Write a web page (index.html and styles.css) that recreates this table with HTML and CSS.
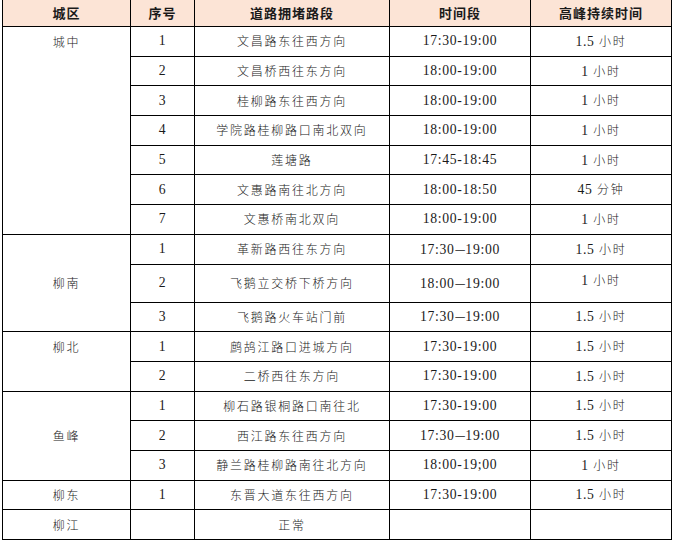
FILE: index.html
```html
<!DOCTYPE html>
<html lang="zh-CN">
<head>
<meta charset="utf-8">
<link rel="stylesheet" href="styles.css">
</head>
<body>
<table class="traffic">
  <colgroup>
    <col class="c-area"><col class="c-no"><col class="c-road"><col class="c-time"><col class="c-dur">
  </colgroup>
  <thead>
    <tr><th>城区</th><th>序号</th><th>道路拥堵路段</th><th>时间段</th><th>高峰持续时间</th></tr>
  </thead>
  <tbody>
    <tr><td class="area top" rowspan="7">城中</td><td class="num">1</td><td>文昌路东往西方向</td><td class="num">17:30-19:00</td><td><span class="num">1.5</span> 小时</td></tr>
    <tr><td class="num">2</td><td>文昌桥西往东方向</td><td class="num">18:00-19:00</td><td><span class="num">1</span> 小时</td></tr>
    <tr><td class="num">3</td><td>桂柳路东往西方向</td><td class="num">18:00-19:00</td><td><span class="num">1</span> 小时</td></tr>
    <tr><td class="num">4</td><td>学院路桂柳路口南北双向</td><td class="num">18:00-19:00</td><td><span class="num">1</span> 小时</td></tr>
    <tr><td class="num">5</td><td>莲塘路</td><td class="num">17:45-18:45</td><td><span class="num">1</span> 小时</td></tr>
    <tr><td class="num">6</td><td>文惠路南往北方向</td><td class="num">18:00-18:50</td><td><span class="num">45</span> 分钟</td></tr>
    <tr><td class="num">7</td><td>文惠桥南北双向</td><td class="num">18:00-19:00</td><td><span class="num">1</span> 小时</td></tr>

    <tr><td class="area" rowspan="3">柳南</td><td class="num">1</td><td>革新路西往东方向</td><td class="num">17:30<span class="dash">—</span>19:00</td><td><span class="num">1.5</span> 小时</td></tr>
    <tr class="tall"><td class="num">2</td><td>飞鹅立交桥下桥方向</td><td class="num">18:00<span class="dash">—</span>19:00</td><td class="raised"><span class="num">1</span> 小时</td></tr>
    <tr><td class="num">3</td><td>飞鹅路火车站门前</td><td class="num">17:30<span class="dash">—</span>19:00</td><td><span class="num">1.5</span> 小时</td></tr>

    <tr><td class="area top" rowspan="2">柳北</td><td class="num">1</td><td>鹧鸪江路口进城方向</td><td class="num">17:30-19:00</td><td><span class="num">1.5</span> 小时</td></tr>
    <tr><td class="num">2</td><td>二桥西往东方向</td><td class="num">17:30-19:00</td><td><span class="num">1.5</span> 小时</td></tr>

    <tr><td class="area" rowspan="3">鱼峰</td><td class="num">1</td><td>柳石路银桐路口南往北</td><td class="num">17:30-19:00</td><td><span class="num">1.5</span> 小时</td></tr>
    <tr><td class="num">2</td><td>西江路东往西方向</td><td class="num">17:30<span class="dash">—</span>19:00</td><td><span class="num">1.5</span> 小时</td></tr>
    <tr><td class="num">3</td><td>静兰路桂柳路南往北方向</td><td class="num">18:00-19;00</td><td><span class="num">1</span> 小时</td></tr>

    <tr><td class="area">柳东</td><td class="num">1</td><td>东晋大道东往西方向</td><td class="num">17:30-19:00</td><td><span class="num">1.5</span> 小时</td></tr>
    <tr><td class="area">柳江</td><td></td><td>正常</td><td></td><td></td></tr>
  </tbody>
</table>
</body>
</html>
```
FILE: styles.css
```css
html, body {
  margin: 0;
  padding: 0;
  background: #ffffff;
}

.traffic {
  border-collapse: collapse;
  table-layout: fixed;
  width: 669px;
  margin-left: 2px;
  color: #222;
  font-family: "Noto Sans CJK SC", sans-serif;
  font-size: 12px;
  font-weight: 300;
  letter-spacing: 1.75px;
}

.c-area { width: 128px; }
.c-no { width: 64px; }
.c-road { width: 195px; }
.c-time { width: 141px; }
.c-dur { width: 141px; }

.traffic th,
.traffic td {
  border: 1px solid #000;
  text-align: center;
  padding: 0;
  line-height: 16px;
}

.traffic th {
  border-top: 0;
  height: 26px;
  background: #fce4d6;
  font-weight: 700;
  font-size: 13px;
  letter-spacing: 1px;
  color: #1a1a1a;
}

.traffic td {
  height: 28.7px;
  vertical-align: middle;
}

.traffic tr.tall td {
  height: 37px;
}

.traffic tr.tall td.raised {
  height: 31px;
  padding-bottom: 6px;
}

.traffic td.area.top {
  vertical-align: top;
  padding-top: 7px;
}

.num {
  font-family: "Liberation Serif", serif;
  font-size: 13.7px;
  font-weight: 400;
  letter-spacing: 0.7px;
  color: #1a1a1a;
}

.dash {
  font-family: "Noto Sans CJK SC", sans-serif;
  font-size: 12px;
  letter-spacing: 0;
}
```
